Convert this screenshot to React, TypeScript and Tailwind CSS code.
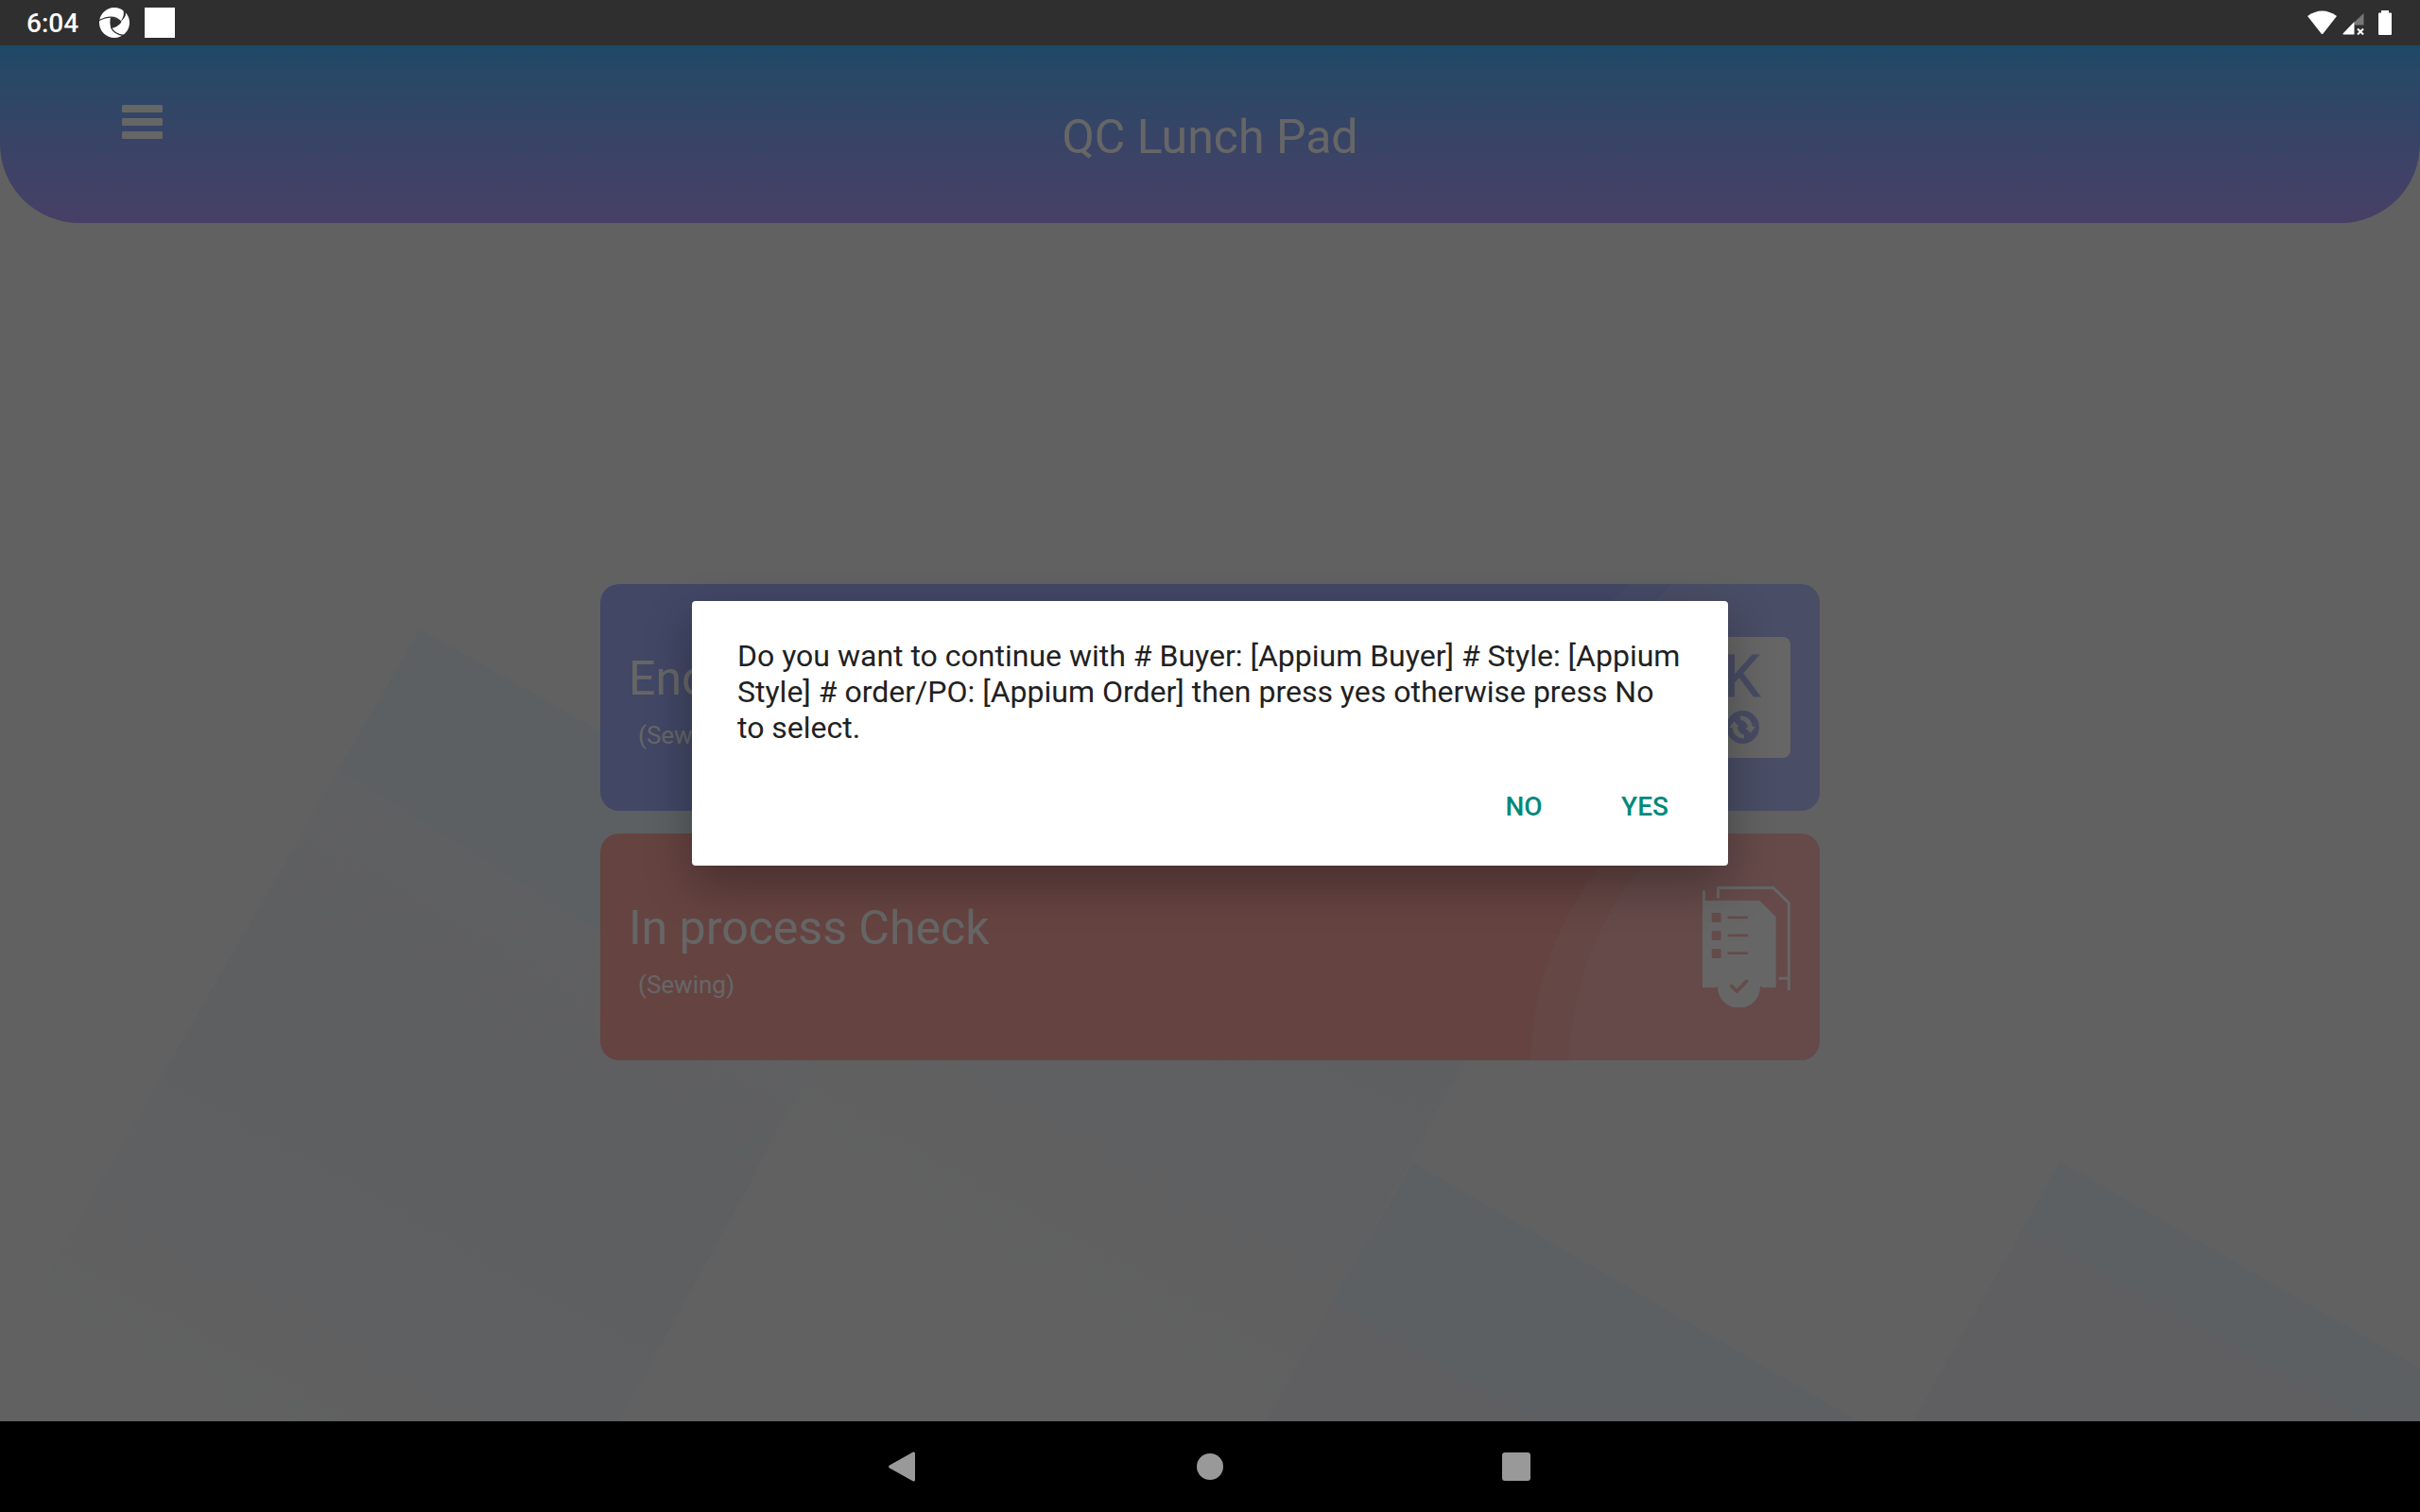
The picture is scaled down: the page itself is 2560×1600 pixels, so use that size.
import type { ReactNode } from "react";

function StatusBar() {
  return (
    <div className="relative z-20 flex h-12 items-center justify-between bg-[#2f2f2f] pl-7 pr-[30px] text-white">
      <div className="flex items-center">
        <span className="w-[77px] pt-0.5 text-[28px] font-medium leading-8">6:04</span>
        <svg viewBox="0 0 32 32" className="h-8 w-8" aria-hidden="true">
          <circle cx="16" cy="16" r="16" fill="#fff" />
          <path d="M12 10.500Q19 11 23.500 15.500Q19 21 12.500 22Q10.500 16 12 10.500Z" fill="#2f2f2f" />
          <path d="M25.500 2.500L28 4.500Q28.500 11 22.500 14.500Q27 9 25.500 2.500Z" fill="#2f2f2f" />
          <g fill="none" stroke="#2f2f2f" strokeWidth="1.300">
            <path d="M23 15Q15 6 0 13.500" />
            <path d="M12.500 21Q16 28.500 26 29.500" />
          </g>
        </svg>
        <span className="ml-4 h-8 w-8 bg-white" />
      </div>
      <div className="flex items-center">
        <svg viewBox="0 0 31 26" className="h-[26px] w-[31px]" aria-hidden="true">
          <path d="M0 6Q15.500-5 31 6L16.500 24.500Q15.500 25.500 14.500 24.500Z" fill="#fff" />
        </svg>
        <svg viewBox="0 0 23 23" className="ml-1.5 mt-0.5 h-[23px] w-[23px]" aria-hidden="true">
          <path d="M22.500 0V12.500H12.500V9.500Z" fill="#777" />
          <path d="M12.500 9V22.500H1Q0 22.500 .5 21.500Z" fill="#fff" />
          <path d="M16 16.500L22 22.500M22 16.500L16 22.500" stroke="#fff" strokeWidth="2" />
        </svg>
        <svg viewBox="0 0 14 26" className="ml-[15px] h-[26px] w-3.5" aria-hidden="true">
          <path d="M3 0H11V2.500H13Q14 2.500 14 3.500V25Q14 26 13 26H1Q0 26 0 25V3.500Q0 2.500 1 2.500H3Z" fill="#fff" />
        </svg>
      </div>
    </div>
  );
}

function Header() {
  return (
    <header className="grid h-[188px] grid-cols-[1fr_auto_1fr] items-center rounded-b-[84px] bg-linear-to-b from-[#4bb6ff] to-[#b29eff]">
      <button type="button" aria-label="Open menu" className="mb-[26px] ml-[129px] w-[43px]">
        <svg viewBox="0 0 43 36" className="h-9 w-[43px]" fill="#fff" aria-hidden="true">
          <rect width="43" height="8" rx="1.500" />
          <rect y="14" width="43" height="8" rx="1.500" />
          <rect y="28" width="43" height="8" rx="1.500" />
        </svg>
      </button>
      <h1 className="pt-1.5 text-[50px] leading-[60px] text-white">QC Lunch Pad</h1>
    </header>
  );
}

function Backdrop() {
  return (
    <svg
      viewBox="0 0 2560 1268"
      preserveAspectRatio="none"
      className="absolute inset-0 h-full w-full"
      aria-hidden="true"
    >
      <defs>
        <linearGradient id="slab" gradientUnits="userSpaceOnUse" x1="358" y1="578" x2="35" y2="1152">
          <stop offset="0" stopColor="#eeeff2" />
          <stop offset="0.400" stopColor="#ebedf3" />
          <stop offset="0.650" stopColor="#eceff3" />
          <stop offset="1" stopColor="#f2f2f2" />
        </linearGradient>
        <linearGradient id="mid" gradientUnits="userSpaceOnUse" x1="1555" y1="884" x2="1340" y2="1267">
          <stop offset="0" stopColor="#ebeef3" />
          <stop offset="0.450" stopColor="#edeff3" />
          <stop offset="1" stopColor="#f2f2f2" />
        </linearGradient>
      </defs>
      <path d="M358 578L958 908L862 892L655 1268H0V1200Z" fill="url(#slab)" />
      <path d="M444 430L958 720L862 892L358 578Z" fill="#e5f0f4" />
      <path d="M900 820L1620 760L1409 1141L1339 1268L800 1001Z" fill="url(#mid)" />
      <path d="M1409 1141L1625 1268H1339Z" fill="#eeeef2" />
      <path d="M1495 994L1966 1268H1625L1409 1141Z" fill="#e5f0f4" />
      <path d="M2140 1064L2504 1268H2023Z" fill="#eeeef2" />
      <path d="M2179 993L2560 1212V1268H2504L2140 1064Z" fill="#e5f0f4" />
    </svg>
  );
}

function Rings() {
  return (
    <svg viewBox="0 0 310 240" className="absolute bottom-0 right-0 h-60 w-[310px]" fill="#fff" fillOpacity="0.110" aria-hidden="true">
      <circle cx="353" cy="248" r="349" />
      <circle cx="380" cy="248" r="335" />
    </svg>
  );
}

function EndlineIcon() {
  return (
    <svg viewBox="0 0 128 128" className="relative h-32 w-32" aria-hidden="true">
      <rect width="128" height="128" rx="8" fill="#fff" />
      <text x="96" y="63" textAnchor="end" fontSize="61" fill="#b5bffa" stroke="#b5bffa" strokeWidth="1">K</text>
      <circle cx="77.500" cy="95.500" r="17.500" fill="#b5bffa" />
      <g fill="#fff">
        <path d="M75 83.500Q86 84 88 95H91L86 101.500L80 96H83Q82 89 75 87.500Z" />
        <path d="M79 107.500Q68 107 66.500 96H63.500L68.500 89.500L74 95H71.500Q73 102 79 103.500Z" />
      </g>
    </svg>
  );
}

function ProcessIcon() {
  return (
    <svg viewBox="663 234 279 384" className="relative h-32 w-[93px]" fill="#fff" aria-hidden="true">
      <path d="M663 250Q663 246 667 246Q672 246 672 250V279H844L896 331V555H853Q849 549 846 553A67 67 0 0 1 711 553Q708 549 704 555H663Z" />
      <path d="M712.500 268V238.500H888L937 287V560M908 525.500H937" fill="none" stroke="#fff" strokeWidth="9" strokeLinecap="round" strokeLinejoin="round" />
      <g fill="#fdbcb8">
        <rect x="692" y="318" width="30" height="30" rx="3" />
        <rect x="692" y="375" width="30" height="30" rx="3" />
        <rect x="692" y="432" width="30" height="30" rx="3" />
      </g>
      <path d="M746 332.500H804M746 389.500H804M746 446H804" stroke="#fdbcb8" strokeWidth="8" strokeLinecap="round" />
      <path d="M755 550L772 567L803 535" fill="none" stroke="#fdbcb8" strokeWidth="11" strokeLinecap="round" strokeLinejoin="round" />
    </svg>
  );
}

function ModuleCard({ title, tone, icon }: { title: string; tone: string; icon: ReactNode }) {
  return (
    <button
      type="button"
      className={`relative flex h-60 w-full items-center justify-between overflow-hidden rounded-[20px] pl-[30px] pr-[31px] text-left text-white ${tone}`}
    >
      <Rings />
      <span className="relative flex flex-col pt-1.5">
        <span className="text-[50px] leading-[60px]">{title}</span>
        <span className="mt-3.5 pl-2.5 text-[26px] leading-8">(Sewing)</span>
      </span>
      {icon}
    </button>
  );
}

function ConfirmDialog() {
  return (
    <div className="absolute inset-x-0 bottom-24 top-12 z-10 flex items-center justify-center">
      <div
        role="dialog"
        aria-modal="true"
        aria-describedby="confirm-message"
        className="w-[1096px] rounded-sm bg-white px-12 pb-[22px] pt-[39px] shadow-[0_20px_50px_rgba(0,0,0,0.3)]"
      >
        <p id="confirm-message" className="text-[32px] leading-[38px] text-[#212121]">
          Do you want to continue with # Buyer: [Appium Buyer] # Style: [Appium Style] # order/PO: [Appium Order] then
          press yes otherwise press No to select.
        </p>
        <div className="-mr-6 mt-[25px] flex justify-end text-[28px] font-medium text-[#00897b]">
          <button type="button" className="h-20 w-32">NO</button>
          <button type="button" className="h-20 w-32">YES</button>
        </div>
      </div>
    </div>
  );
}

function NavBar() {
  return (
    <nav className="relative z-20 flex h-24 justify-center bg-black" aria-label="System navigation">
      <button type="button" aria-label="Back" className="flex w-[324px] items-center justify-center">
        <svg viewBox="0 0 32 32" className="h-8 w-8" aria-hidden="true">
          <path d="M1 14.500L26 .5Q28 0 28 2V30Q28 32 26 31.500L1 17.500Q-1 16 1 14.500Z" fill="#999" />
        </svg>
      </button>
      <button type="button" aria-label="Home" className="flex w-[324px] items-center justify-center">
        <span className="h-7 w-7 rounded-full bg-[#999]" />
      </button>
      <button type="button" aria-label="Recent apps" className="flex w-[324px] items-center justify-center">
        <span className="h-[30px] w-[30px] rounded-[3px] bg-[#999]" />
      </button>
    </nav>
  );
}

export default function App() {
  return (
    <div className="relative flex min-h-screen flex-col bg-[#f2f2f2] font-[Roboto,sans-serif]">
      <StatusBar />
      <Header />
      <main className="relative flex flex-1 flex-col items-center justify-center">
        <Backdrop />
        <div className="relative flex w-[1290px] max-w-full flex-col gap-6">
          <ModuleCard title="End" tone="bg-[#a3b2fd]" icon={<EndlineIcon />} />
          <ModuleCard title="In process Check" tone="bg-[#fda8a3]" icon={<ProcessIcon />} />
        </div>
      </main>
      <NavBar />
      <div className="absolute inset-0 bg-black/60" />
      <ConfirmDialog />
    </div>
  );
}
